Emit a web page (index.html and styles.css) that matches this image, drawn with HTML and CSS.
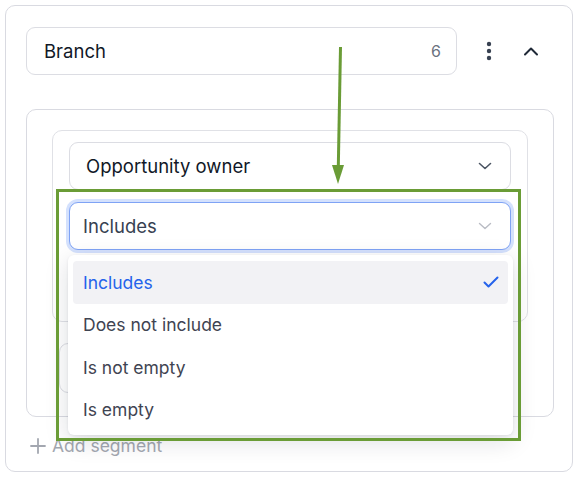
FILE: index.html
```html
<!DOCTYPE html>
<html>
<head>
<meta charset="utf-8">
<link rel="stylesheet" href="styles.css">
</head>
<body>
<div class="stage">
  <div class="card">
    <div class="header">
      <div class="field branch">
        <span class="label">Branch</span>
        <span class="count">6</span>
      </div>
      <button class="icon-btn dots" aria-label="More">
        <svg width="6" height="20" viewBox="0 0 6 20"><circle cx="3" cy="3" r="2.2"/><circle cx="3" cy="10" r="2.2"/><circle cx="3" cy="17" r="2.2"/></svg>
      </button>
      <button class="icon-btn chev" aria-label="Collapse">
        <svg width="16" height="10" viewBox="0 0 16 10"><path d="M2 8.5 L8 2.5 L14 8.5" fill="none" stroke="#1f2937" stroke-width="2" stroke-linecap="round" stroke-linejoin="round"/></svg>
      </button>
    </div>

    <div class="segment">
      <div class="filter">
        <div class="select">
          <span class="val dark">Opportunity owner</span>
          <svg width="14" height="8" viewBox="0 0 14 8"><path d="M1.5 1.5 L7 6.5 L12.5 1.5" fill="none" stroke="#4b5563" stroke-width="1.6" stroke-linecap="round" stroke-linejoin="round"/></svg>
        </div>
        <div class="select focused">
          <span class="val">Includes</span>
          <svg width="14" height="8" viewBox="0 0 14 8"><path d="M1.5 1.5 L7 6.5 L12.5 1.5" fill="none" stroke="#b9bcc4" stroke-width="1.4" stroke-linecap="round" stroke-linejoin="round"/></svg>
        </div>
        <div class="select blank"></div>
      </div>
      <div class="add-filter"></div>
    </div>

    <div class="add-segment">
      <svg width="16" height="16" viewBox="0 0 16 16"><path d="M8 1 V15 M1 8 H15" stroke="#a3a7b0" stroke-width="1.8" stroke-linecap="round"/></svg>
      <span>Add segment</span>
    </div>
  </div>

  <ul class="menu">
    <li class="item active"><span>Includes</span>
      <svg width="16" height="12" viewBox="0 0 16 12"><path d="M1.5 6.5 L5.5 10.5 L14.5 1.5" fill="none" stroke="#2563eb" stroke-width="2" stroke-linecap="round" stroke-linejoin="round"/></svg>
    </li>
    <li class="item"><span>Does not include</span></li>
    <li class="item"><span>Is not empty</span></li>
    <li class="item"><span>Is empty</span></li>
  </ul>

  <div class="annot-box"></div>
  <svg class="annot-arrow" width="30" height="150" viewBox="0 0 30 150">
    <path d="M17.5 2 L15.3 122" stroke="#6a9c36" stroke-width="3" fill="none"/>
    <path d="M9 120 L21 120 L15 139 Z" fill="#6a9c36"/>
  </svg>
</div>
</body>
</html>
```

FILE: styles.css
```css
* { box-sizing: border-box; }
html, body {
  margin: 0;
  padding: 0;
  background: #ffffff;
  font-family: Inter, "Noto Sans", "Liberation Sans", sans-serif;
  color: #111827;
}
.stage {
  position: relative;
  width: 580px;
  height: 479px;
  padding: 5px 7px 0 5px;
}
.card {
  width: 568px;
  height: 467px;
  border: 1px solid #d9dae1;
  border-radius: 10px;
  padding: 21px 19px 0 20px;
}
.header {
  display: flex;
  align-items: center;
  height: 48px;
}
.field {
  border: 1px solid #dcdde3;
  border-radius: 9px;
  background: #fff;
}
.branch {
  width: 431px;
  height: 48px;
  display: flex;
  align-items: center;
  justify-content: space-between;
  padding: 0 15px 0 17px;
}
.branch .label {
  font-size: 18.5px;
  color: #111827;
}
.branch .count {
  font-size: 16px;
  color: #6b7280;
}
.icon-btn {
  border: 0;
  background: none;
  padding: 0;
  display: flex;
  align-items: center;
  justify-content: center;
}
.dots {
  width: 20px;
  height: 30px;
  margin-left: 22px;
}
.dots svg { fill: #374151; }
.chev {
  width: 20px;
  height: 30px;
  margin-left: 22px;
}
.segment {
  margin-top: 34px;
  width: 528px;
  height: 308px;
  border: 1px solid #d9dae1;
  border-radius: 10px;
  padding: 20px 25px 0 25px;
}
.filter {
  width: 476px;
  height: 192px;
  border: 1px solid #e0e1e6;
  border-radius: 10px;
  padding: 11px 16px;
  display: flex;
  flex-direction: column;
  gap: 12px;
}
.select {
  height: 48px;
  border: 1px solid #dcdde3;
  border-radius: 9px;
  display: flex;
  align-items: center;
  justify-content: space-between;
  padding: 0 18px 0 16px;
  background: #fff;
  flex: none;
}
.select .val {
  font-size: 18.5px;
  color: #374151;
}
.select .val.dark { color: #111827; }
.select.focused {
  border-color: #7fa3f5;
  box-shadow: 0 0 0 3px #d4e1fd;
  padding-left: 13px;
}
.add-filter {
  margin-top: 21px;
  margin-left: 7px;
  width: 150px;
  height: 50px;
  border: 1px solid #dcdde3;
  border-radius: 9px;
}
.add-segment {
  display: flex;
  align-items: center;
  gap: 6px;
  margin-top: 18px;
  margin-left: 4px;
  font-size: 17.5px;
  color: #a3a7b0;
}
.menu {
  position: absolute;
  left: 68px;
  top: 255px;
  width: 445px;
  margin: 0;
  padding: 6px 5px 4px 5px;
  list-style: none;
  background: #fff;
  border-radius: 6px;
  box-shadow: 0 6px 24px rgba(17, 24, 39, 0.14), 0 1px 3px rgba(17, 24, 39, 0.08);
}
.item {
  height: 42.5px;
  display: flex;
  align-items: center;
  justify-content: space-between;
  padding: 0 9px 0 10px;
  border-radius: 4px;
  font-size: 17.5px;
  color: #3f4452;
}
.item.active {
  background: #f2f2f5;
  color: #2563eb;
}
.annot-box {
  position: absolute;
  left: 56px;
  top: 189px;
  width: 465px;
  height: 252px;
  border: 3px solid #6a9c36;
}
.annot-arrow {
  position: absolute;
  left: 323px;
  top: 45px;
}
```
